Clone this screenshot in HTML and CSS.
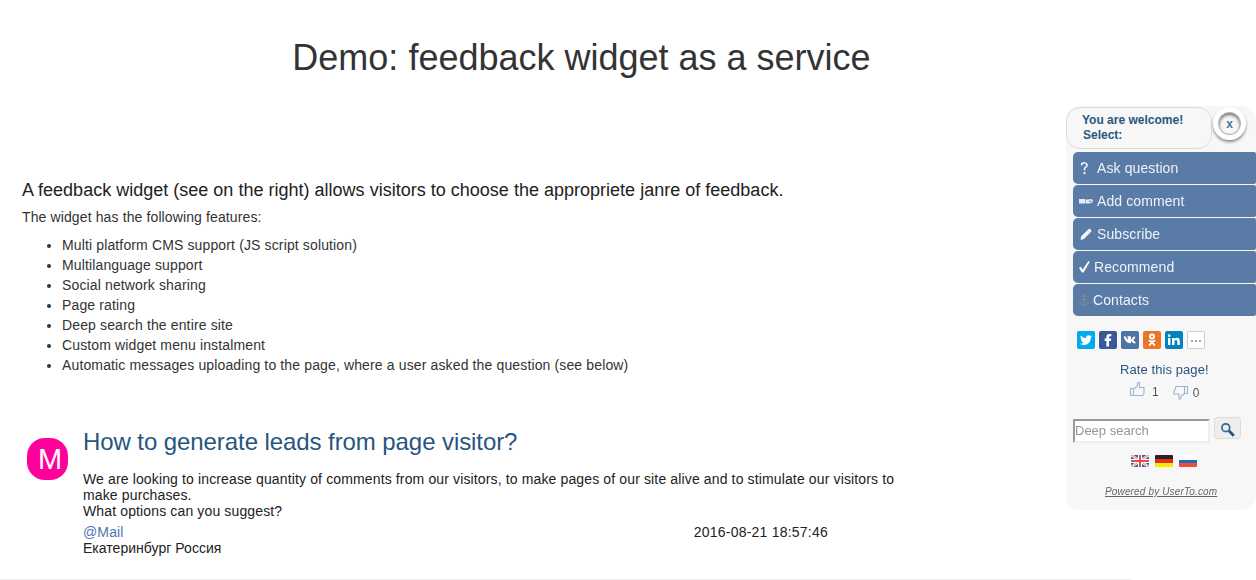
FILE: index.html
```html
<!DOCTYPE html>
<html lang="en">
<head>
<meta charset="utf-8">
<title>Demo: feedback widget as a service</title>
<link rel="stylesheet" href="styles.css">
</head>
<body>
<main class="page">
  <h1 class="title"><span>Demo: feedback widget as a service</span></h1>
  <section class="intro">
    <h4 class="lead"><span>A feedback widget (see on the right) allows visitors to choose the appropriete janre of feedback.</span></h4>
    <p class="sub">The widget has the following features:</p>
    <ul class="features">
      <li>Multi platform CMS support (JS script solution)</li>
      <li>Multilanguage support</li>
      <li>Social network sharing</li>
      <li>Page rating</li>
      <li>Deep search the entire site</li>
      <li>Custom widget menu instalment</li>
      <li>Automatic messages uploading to the page, where a user asked the question (see below)</li>
    </ul>
  </section>
  <article class="comment">
    <div class="avatar">M</div>
    <div class="body">
      <h3 class="question">How to generate leads from page visitor?</h3>
      <p class="text">We are looking to increase quantity of comments from our visitors, to make pages of our site alive and to stimulate our visitors to<br>make purchases.<br>What options can you suggest?</p>
      <div class="meta">
        <div><a class="mail">@Mail</a><br><span class="city">Екатеринбург Россия</span></div>
        <time>2016-08-21 18:57:46</time>
      </div>
    </div>
  </article>
</main>

<aside class="widget">
  <header class="head">
    <div class="welcome">You are welcome!<br><span class="select">Select:</span></div>
    <button class="close">x</button>
  </header>
  <nav class="menu">
    <a class="item"><svg width="24" height="16" viewBox="0 0 24 16"><path d="M8.700 5.500V4.200Q8.800 2.700 11 2.700T14.200 4.800Q14.200 6.200 12.700 7.200Q11.500 8 11.500 9.500V10.500" fill="none" stroke="#eef3fa" stroke-width="1.600"/><path d="M10.500 12h2v2h-2z" fill="#eef3fa"/></svg>Ask question</a>
    <a class="item"><svg width="24" height="16" viewBox="0 0 24 16"><path d="M6 6h6v4.500H6zM12.500 6.500h3L17 6q3 .2 3 2-.3 1.600-2 2l-2 .5h-3.500z" fill="#e3ebf6"/><path d="M16 8.200h2.500" stroke="#5b7ba7" stroke-width="1"/></svg>Add comment</a>
    <a class="item"><svg width="24" height="16" viewBox="0 0 24 16"><path d="M7.500 14l.7-3.700L15.600 3q1-.8 2.200.4t.3 2.400l-7.200 7.100z" fill="#f4f7fc"/><path d="M14.200 4.500l2.200 2.200" stroke="#a9bbd3" stroke-width=".7"/></svg>Subscribe</a>
    <a class="item"><svg width="21" height="16" viewBox="0 0 21 16"><path d="M6 9l1.800-1.200 1.700 3L15.300 2.300l1.600.5L10.500 13.500H9z" fill="#fff"/></svg>Recommend</a>
    <a class="item"><svg width="20" height="16" viewBox="0 0 20 16"><g fill="none" stroke="#7b8c99" stroke-width="1"><circle cx="11" cy="4" r="1.300"/><path d="M11 5.500V13M8.500 7.500h5M6.500 10Q7.500 13 11 13T15.500 10M6 11.500l.5-1.700 1.700.7M16 11.500l-.5-1.700-1.700.7"/></g></svg>Contacts</a>
  </nav>
  <div class="social">
    <svg class="tw" viewBox="0 0 18 18"><path d="M15 5.200q-.6.300-1.300.4.700-.5 1-1.300-.7.400-1.500.6a2.500 2.500 0 0 0-4.200 2.300Q6 7 3.800 4.500q-1.200 2 .8 3.400-.7 0-1.100-.3.100 1.900 2 2.400H4.400q.7 1.600 2.300 1.700-1.500 1.200-3.700 1.100 2 1.200 3.900 1.200c4.400 0 7-3.600 6.900-7.500q.7-.5 1.200-1.300z" fill="#fff"/></svg>
    <svg class="fb" viewBox="0 0 18 18"><path d="M12.300 3v2.200h-1.200q-1.100 0-1.100 1v1.300h2.200L11.900 10H10v5.500H7.400V10H5.700V7.500h1.700V5.800Q7.500 3 10.300 3z" fill="#fff"/></svg>
    <svg class="vk" viewBox="0 0 18 18"><path d="M2.500 5.500h2.300q.8 2.400 2 3.300V6L6 5.300h3.700l.3.400v3q1.100-.7 2-3h2.500q-.2 1.500-2.200 3.400 1.600 1.200 2.700 3.200h-2.800Q11 10.500 10 10.200v2.100H8.800Q4.500 12 2.500 5.500z" fill="#fff"/></svg>
    <svg class="ok" viewBox="0 0 18 18"><g fill="none" stroke="#fff" stroke-width="1.900" stroke-linecap="round"><circle cx="9" cy="5.500" r="2"/><path d="M6.500 9.700Q9 11.200 11.500 9.700M9 11l-2.300 3M9 11l2.300 3"/></g></svg>
    <svg class="li" viewBox="0 0 18 18"><path d="M3 7h2.400v7H3zM3 3.500h2.400v2.200H3zM7 7h2.300v1q.9-1.200 2.500-1.200 3 0 3 3.300V14h-2.500v-3.600q0-1.500-1.300-1.500-1.500 0-1.500 1.700V14H7z" fill="#fff"/></svg>
    <svg class="more" viewBox="0 0 16 16"><path d="M3 8h2v2H3zM7 8h2v2H7zM11 8h2v2h-2z" fill="#aaa"/></svg>
  </div>
  <div class="rate">Rate this page!</div>
  <div class="votes">
    <svg class="up" width="16" height="17" viewBox="0 0 16 17"><path d="M1.500 7.500h3v7h-3zM4.500 8L8 5.500 9 1.500h1.500v5H15v6l-1.500 2h-9" fill="none" stroke="#9db3d3" stroke-width="1.100"/></svg><span class="vote">1</span>
    <svg class="down" width="16" height="17" viewBox="0 0 16 17"><path d="M14.500 1.500h-3v7h3zM11.500 1.500H3L1 7v2h5v5h1.500l1-3.500 3-2" fill="none" stroke="#9db3d3" stroke-width="1.100"/></svg><span class="vote">0</span>
  </div>
  <div class="search">
    <input class="field" type="text" placeholder="Deep search">
    <button class="go"><svg width="16" height="16" viewBox="0 0 16 16"><circle cx="5.800" cy="5.700" r="3.900" fill="none" stroke="#386797" stroke-width="1.700"/><path d="M8.800 8.700l5 5" stroke="#245687" stroke-width="2.800"/></svg></button>
  </div>
  <div class="flags">
    <svg viewBox="0 0 18 12"><path fill="#2865ac" d="M0 0h18v12H0z"/><path d="M0 0l18 12M18 0L0 12" stroke="#fff" stroke-width="2.600"/><path d="M0 0l18 12M18 0L0 12" stroke="#e84b3c" stroke-width=".8"/><path d="M9 0v12M0 6h18" stroke="#fff" stroke-width="4"/><path d="M9 0v12M0 6h18" stroke="#e84b3c" stroke-width="2"/></svg>
    <svg viewBox="0 0 18 12"><path fill="#292323" d="M0 0h18v4H0z"/><path fill="#e22d20" d="M0 4h18v4H0z"/><path fill="#fbea00" d="M0 8h18v4H0z"/></svg>
    <svg viewBox="0 0 18 12"><path fill="#fff" d="M0 0h18v5H0z"/><path fill="#206cb5" d="M0 5h18v3H0z"/><path fill="#ec4c3c" d="M0 8h18v4H0z"/></svg>
  </div>
  <a class="powered">Powered by UserTo.com</a>
</aside>
</body>
</html>
```
FILE: styles.css
```css
* { box-sizing: border-box; }
body {
  margin: 0;
  height: 580px;
  overflow: hidden;
  background: #fff;
  color: #333;
  font: 14px/20px "Liberation Sans", Arial, sans-serif;
  white-space: nowrap;
}
h1, h3, h4, p, ul { margin: 0; font-weight: 400; }
.page { width: 1131px; height: 580px; padding-top: 38px; border-bottom: 1px solid #eee; }
.title { width: 1163px; text-align: center; font-size: 36px; line-height: 40px; }
.intro { padding: 102px 0 0 22px; }
.lead { font-size: 18px; line-height: 20px; color: #222; letter-spacing: 0.01px; }
.sub { margin-top: 7px; letter-spacing: 0.12px; }
.features { margin-top: 8px; padding-left: 40px; letter-spacing: 0.135px; }
.comment { display: flex; padding: 53px 0 0 27px; color: #222; }
.avatar {
  width: 41px;
  height: 42px;
  margin: 10px 15px 0 0;
  padding-left: 5px;
  border-radius: 18px;
  background: #ff009c;
  color: #fff;
  font-size: 29px;
  line-height: 43px;
  text-align: center;
}
.question { font-size: 24px; line-height: 27px; color: #285580; letter-spacing: -0.08px; }
.text { margin-top: 16px; line-height: 16px; letter-spacing: 0.135px; }
.meta { display: flex; justify-content: space-between; width: 745px; margin-top: 5px; line-height: 16px; }
.meta time { letter-spacing: 0.22px; }
.mail { color: #4b79b0; letter-spacing: 0.15px; }
.city { letter-spacing: 0.03px; }

.widget {
  position: fixed;
  top: 106px;
  right: 0;
  width: 190px;
  height: 404px;
  border-radius: 14px;
  background: #f7f7f7;
  color: #285580;
}
.head { display: flex; height: 43px; }
.welcome {
  width: 146px;
  height: 42px;
  margin-top: 1px;
  padding: 5px 0 0 15px;
  border: 1px solid #ddddd8;
  border-radius: 14px;
  font-size: 12px;
  font-weight: 700;
  line-height: 15px;
}
.select { margin-left: 1px; }
.close {
  width: 33px;
  height: 33px;
  margin: 1px 0 0 1px;
  padding: 0;
  border: 5px solid #fff;
  border-radius: 50%;
  background: #f7f7f7;
  box-shadow: 0 2px 3px #888, inset 0 0 0 1px #bbb, inset 0 2px 3px 1px #777;
  color: #4c7399;
  font: 700 12px/20px "Liberation Sans", Arial, sans-serif;
}
.menu { display: flex; flex-direction: column; gap: 1px; padding: 3px 0 0 7px; }
.item {
  display: flex;
  align-items: center;
  height: 32px;
  border-radius: 5px 2px 2px 5px;
  background: #5b7ba7;
  color: #edf3fa;
  letter-spacing: 0.1px;
}
.item svg { flex: none; }
.social { display: flex; gap: 4px; padding: 15px 0 0 11px; }
.social svg { width: 18px; height: 18px; border-radius: 2px; }
.tw { background: #00aced; }
.fb { background: #3b5998; }
.vk { background: #4d75a3; }
.ok { background: #ed7529; }
.li { background: #0083be; }
.more { border: 1px solid #ccc; background: #fff; }
.rate { margin: 11px 0 0 54px; font-size: 13px; line-height: 20px; letter-spacing: 0.08px; }
.votes { display: flex; height: 24px; padding-left: 63px; color: #555; font-size: 12px; }
.up { margin: 1px 7px 0 0; }
.down { margin: 5px 4px 0 14px; }
.vote { line-height: 25px; }
.down + .vote { line-height: 26px; }
.search { display: flex; gap: 4px; margin: 13px 0 0 7px; }
.field {
  width: 137px;
  height: 24px;
  margin-top: 2px;
  padding: 0 0 2px;
  border: 2px solid #eee;
  border-top-color: #999;
  border-left-color: #999;
  background: #fff;
  font: 13px "Liberation Sans", Arial, sans-serif;
}
.field::placeholder { color: #8f97a1; }
.go {
  display: flex;
  align-items: center;
  justify-content: center;
  width: 27px;
  height: 22px;
  padding: 3px 0 0;
  border: 1px solid #ddddd8;
  border-radius: 3px;
  background: #eee;
}
.flags { display: flex; gap: 6px; margin: 12px 0 0 65px; }
.flags svg { width: 18px; height: 12px; border-radius: 1px; }
.powered {
  display: block;
  width: max-content;
  margin: 20px 0 0 39px;
  color: #666;
  font-size: 10px;
  font-style: italic;
  line-height: 10px;
  letter-spacing: 0.15px;
  text-decoration: underline;
}
```
